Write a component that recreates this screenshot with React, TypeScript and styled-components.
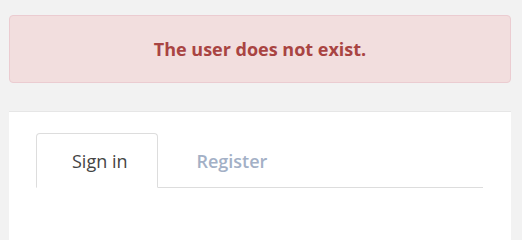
import React, { useState } from "react";
import styled, { createGlobalStyle } from "styled-components";

const GlobalStyle = createGlobalStyle`
    html, body {
        margin: 0;
        padding: 0;
        background: #f2f2f2;
        font-family: "Open Sans", "Liberation Sans", sans-serif;
    }
`;

const Page = styled.div`
    height: 100vh;
    box-sizing: border-box;
    overflow: hidden;
    padding: 15px 11px 0 9px;
    display: flex;
    flex-direction: column;
    gap: 28px;
`;

const Alert = styled.div`
    flex: none;
    height: 68px;
    box-sizing: border-box;
    display: flex;
    align-items: center;
    justify-content: center;
    background: #f2dede;
    border: 1px solid #ebccd1;
    border-radius: 4px;
    color: #a94442;
    font-size: 18px;
    font-weight: 700;
`;

const Card = styled.div`
    flex: 1;
    background: #fff;
    border-top: 1px solid #e6e6e6;
    padding: 21px 28px 0 27px;
`;

const TabList = styled.div`
    display: flex;
    border-bottom: 1px solid #dddddd;
`;

interface ITab {
    active?: boolean;
}

const Tab = styled.button<ITab>`
    height: 55px;
    box-sizing: border-box;
    padding: ${({ active }) => (active ? "0 29px 0 35px" : "0 38px")};
    margin-bottom: -1px;
    background: ${({ active }) => (active ? "#fff" : "transparent")};
    border: 1px solid ${({ active }) => (active ? "#dddddd" : "transparent")};
    border-bottom-color: ${({ active }) => (active ? "#fff" : "transparent")};
    border-radius: 4px 4px 0 0;
    font-family: "Open Sans", "Liberation Sans", sans-serif;
    font-size: 18px;
    font-weight: ${({ active }) => (active ? 400 : 600)};
    color: ${({ active }) => (active ? "#444" : "#a3b0c6")};
    cursor: pointer;
`;

const App: React.FC = () => {
    const [tab, setTab] = useState("signin");

    return (
        <>
            <GlobalStyle />
            <Page>
                <Alert>The user does not exist.</Alert>
                <Card>
                    <TabList>
                        <Tab active={tab === "signin"} onClick={() => setTab("signin")}>
                            Sign in
                        </Tab>
                        <Tab active={tab === "register"} onClick={() => setTab("register")}>
                            Register
                        </Tab>
                    </TabList>
                </Card>
            </Page>
        </>
    );
};

export default App;
